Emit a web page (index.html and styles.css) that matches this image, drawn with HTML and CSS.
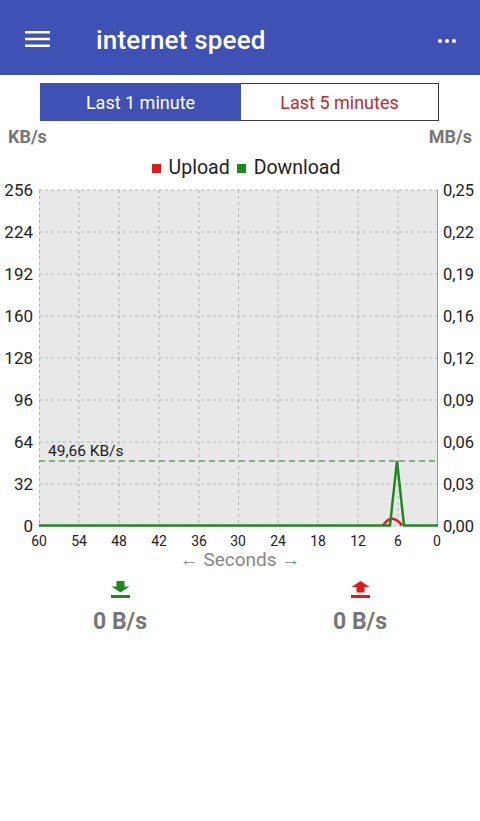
FILE: index.html
```html
<!DOCTYPE html>
<html lang="en">
<head>
  <meta charset="UTF-8" />
  <meta name="viewport" content="width=device-width, initial-scale=1.0"/>
  <title>internet speed</title>
  <link rel="stylesheet" href="styles.css">
</head>

<body>
  <header class="appbar">
    <svg class="menu-icon" width="25" height="18" viewBox="0 0 25 18">
      <rect x="0" y="1" width="25" height="2.5" fill="#fff"/>
      <rect x="0" y="7.75" width="25" height="2.5" fill="#fff"/>
      <rect x="0" y="14.5" width="25" height="2.5" fill="#fff"/>
    </svg>
    <h1 class="title">internet speed</h1>
    <div class="more">
      <span></span><span></span><span></span>
    </div>
  </header>

  <div class="range">
    <div class="range-btn active">Last 1 minute</div>
    <div class="range-btn">Last 5 minutes</div>
  </div>

  <div class="units">
    <span>KB/s</span>
    <span>MB/s</span>
  </div>

  <div class="legend">
    <span class="swatch up"></span>Upload
    <span class="swatch down"></span>Download
  </div>

  <svg class="chart" width="480" height="370" viewBox="0 180 480 370">
    <rect x="39" y="190" width="399" height="336" fill="#e8e8e8"/>
    <g stroke="#b4b4b4" stroke-width="1" stroke-dasharray="3 3">
      <line x1="39" y1="190" x2="438" y2="190"/>
      <line x1="39" y1="232" x2="438" y2="232"/>
      <line x1="39" y1="274" x2="438" y2="274"/>
      <line x1="39" y1="316" x2="438" y2="316"/>
      <line x1="39" y1="358" x2="438" y2="358"/>
      <line x1="39" y1="400" x2="438" y2="400"/>
      <line x1="39" y1="442" x2="438" y2="442"/>
      <line x1="39" y1="484" x2="438" y2="484"/>
      <line x1="39" y1="526" x2="438" y2="526"/>
      <line x1="39.5" y1="190" x2="39.5" y2="526"/>
      <line x1="79" y1="190" x2="79" y2="526"/>
      <line x1="119" y1="190" x2="119" y2="526"/>
      <line x1="159" y1="190" x2="159" y2="526"/>
      <line x1="199" y1="190" x2="199" y2="526"/>
      <line x1="238.5" y1="190" x2="238.5" y2="526"/>
      <line x1="278" y1="190" x2="278" y2="526"/>
      <line x1="318" y1="190" x2="318" y2="526"/>
      <line x1="358" y1="190" x2="358" y2="526"/>
      <line x1="398" y1="190" x2="398" y2="526"/>
    </g>
    <line x1="437.5" y1="190" x2="437.5" y2="526" stroke="#9a9a9a" stroke-width="1"/>

    <!-- average -->
    <line x1="39" y1="461" x2="438" y2="461" stroke="#5e9e5e" stroke-width="1.5" stroke-dasharray="6 4"/>
    <text x="48" y="456" class="avg-label">49,66 KB/s</text>

    <!-- data -->
    <path d="M383 525.5 Q392 512 402 525.5" fill="none" stroke="#d81f1f" stroke-width="2.5"/>
    <polyline points="39,525.5 390,525.5 397,461 404,525.5 438,525.5" fill="none" stroke="#1e8a1e" stroke-width="2.5" stroke-linejoin="miter"/>

    <g class="axis-left">
      <text x="33" y="196">256</text>
      <text x="33" y="238">224</text>
      <text x="33" y="280">192</text>
      <text x="33" y="322">160</text>
      <text x="33" y="364">128</text>
      <text x="33" y="406">96</text>
      <text x="33" y="448">64</text>
      <text x="33" y="490">32</text>
      <text x="33" y="532">0</text>
    </g>
    <g class="axis-right">
      <text x="443" y="196">0,25</text>
      <text x="443" y="238">0,22</text>
      <text x="443" y="280">0,19</text>
      <text x="443" y="322">0,16</text>
      <text x="443" y="364">0,12</text>
      <text x="443" y="406">0,09</text>
      <text x="443" y="448">0,06</text>
      <text x="443" y="490">0,03</text>
      <text x="443" y="532">0,00</text>
    </g>
    <g class="axis-bottom">
      <text x="39" y="546">60</text>
      <text x="79" y="546">54</text>
      <text x="119" y="546">48</text>
      <text x="159" y="546">42</text>
      <text x="199" y="546">36</text>
      <text x="238" y="546">30</text>
      <text x="278" y="546">24</text>
      <text x="318" y="546">18</text>
      <text x="358" y="546">12</text>
      <text x="398" y="546">6</text>
      <text x="437" y="546">0</text>
    </g>
  </svg>

  <div class="seconds">&larr; Seconds &rarr;</div>

  <div class="readouts">
    <div class="readout">
      <svg width="19" height="17" viewBox="0 0 19 17">
        <rect x="5.5" y="0" width="8" height="6" fill="#1e8a1e"/>
        <polygon points="0.5,5.5 18.5,5.5 9.5,11.5" fill="#1e8a1e"/>
        <rect x="0" y="14" width="19" height="3" fill="#1e8a1e"/>
      </svg>
      <div class="rate">0 B/s</div>
    </div>
    <div class="readout">
      <svg width="19" height="17" viewBox="0 0 19 17">
        <polygon points="9.5,0 0.5,6 18.5,6" fill="#e01b1b"/>
        <rect x="5.5" y="5.5" width="8" height="6" fill="#e01b1b"/>
        <rect x="0" y="14" width="19" height="3" fill="#e01b1b"/>
      </svg>
      <div class="rate">0 B/s</div>
    </div>
  </div>
</body>
</html>
```

FILE: styles.css
```css
body {
  margin: 0;
  font-family: Roboto, 'Noto Sans', sans-serif;
  background: #fff;
  color: #222;
}

.appbar {
  display: flex;
  align-items: center;
  height: 75px;
  padding: 0 25px;
  background: #3f51b5;
  color: #fff;
}

.menu-icon {
  flex-shrink: 0;
  margin-top: 3px;
}

.title {
  margin: 5px 0 0 46px;
  font-size: 26px;
  font-weight: 500;
  letter-spacing: 0.2px;
}

.more {
  margin: 6px -1px 0 auto;
  display: flex;
  gap: 3px;
}

.more span {
  width: 4px;
  height: 4px;
  border-radius: 50%;
  background: #fff;
}

.range {
  display: grid;
  grid-template-columns: 201px 1fr;
  height: 38px;
  margin: 8px 41px 0 40px;
}

.range-btn {
  display: flex;
  align-items: center;
  justify-content: center;
  font-size: 18px;
  color: #c62828;
  border: 1px solid #3a3a3a;
  border-left: none;
  background: #fff;
}

.range-btn.active {
  background: #3f51b5;
  color: #fff;
  border: none;
}

.units {
  display: flex;
  justify-content: space-between;
  margin-top: 6px;
  padding: 0 8px;
  line-height: 20px;
  font-size: 18px;
  font-weight: bold;
  color: #777;
}

.legend {
  display: flex;
  align-items: center;
  justify-content: center;
  margin-top: 10px;
  padding-left: 12px;
  line-height: 22px;
  font-size: 19.5px;
  color: #222;
}

.swatch {
  width: 9px;
  height: 9px;
  margin-right: 8px;
}

.swatch.up {
  background: #e01b1b;
}

.swatch.down {
  background: #1e8a1e;
  margin-left: 7px;
}

.chart {
  display: block;
  margin-top: 1px;
}

.chart text {
  font-family: Roboto, 'Noto Sans', sans-serif;
  fill: #222;
}

.axis-left text {
  font-size: 17px;
  text-anchor: end;
}

.axis-right text {
  font-size: 16.5px;
}

.axis-bottom text {
  font-size: 14px;
  text-anchor: middle;
}

.chart .avg-label {
  font-size: 15.5px;
}

.seconds {
  text-align: center;
  line-height: 20px;
  font-size: 19px;
  color: #888;
}

.readouts {
  display: grid;
  grid-template-columns: 1fr 1fr;
  margin-top: 11px;
}

.readout {
  display: flex;
  flex-direction: column;
  align-items: center;
}

.rate {
  margin-top: 10px;
  font-size: 23px;
  font-weight: bold;
  color: #777;
}
```
